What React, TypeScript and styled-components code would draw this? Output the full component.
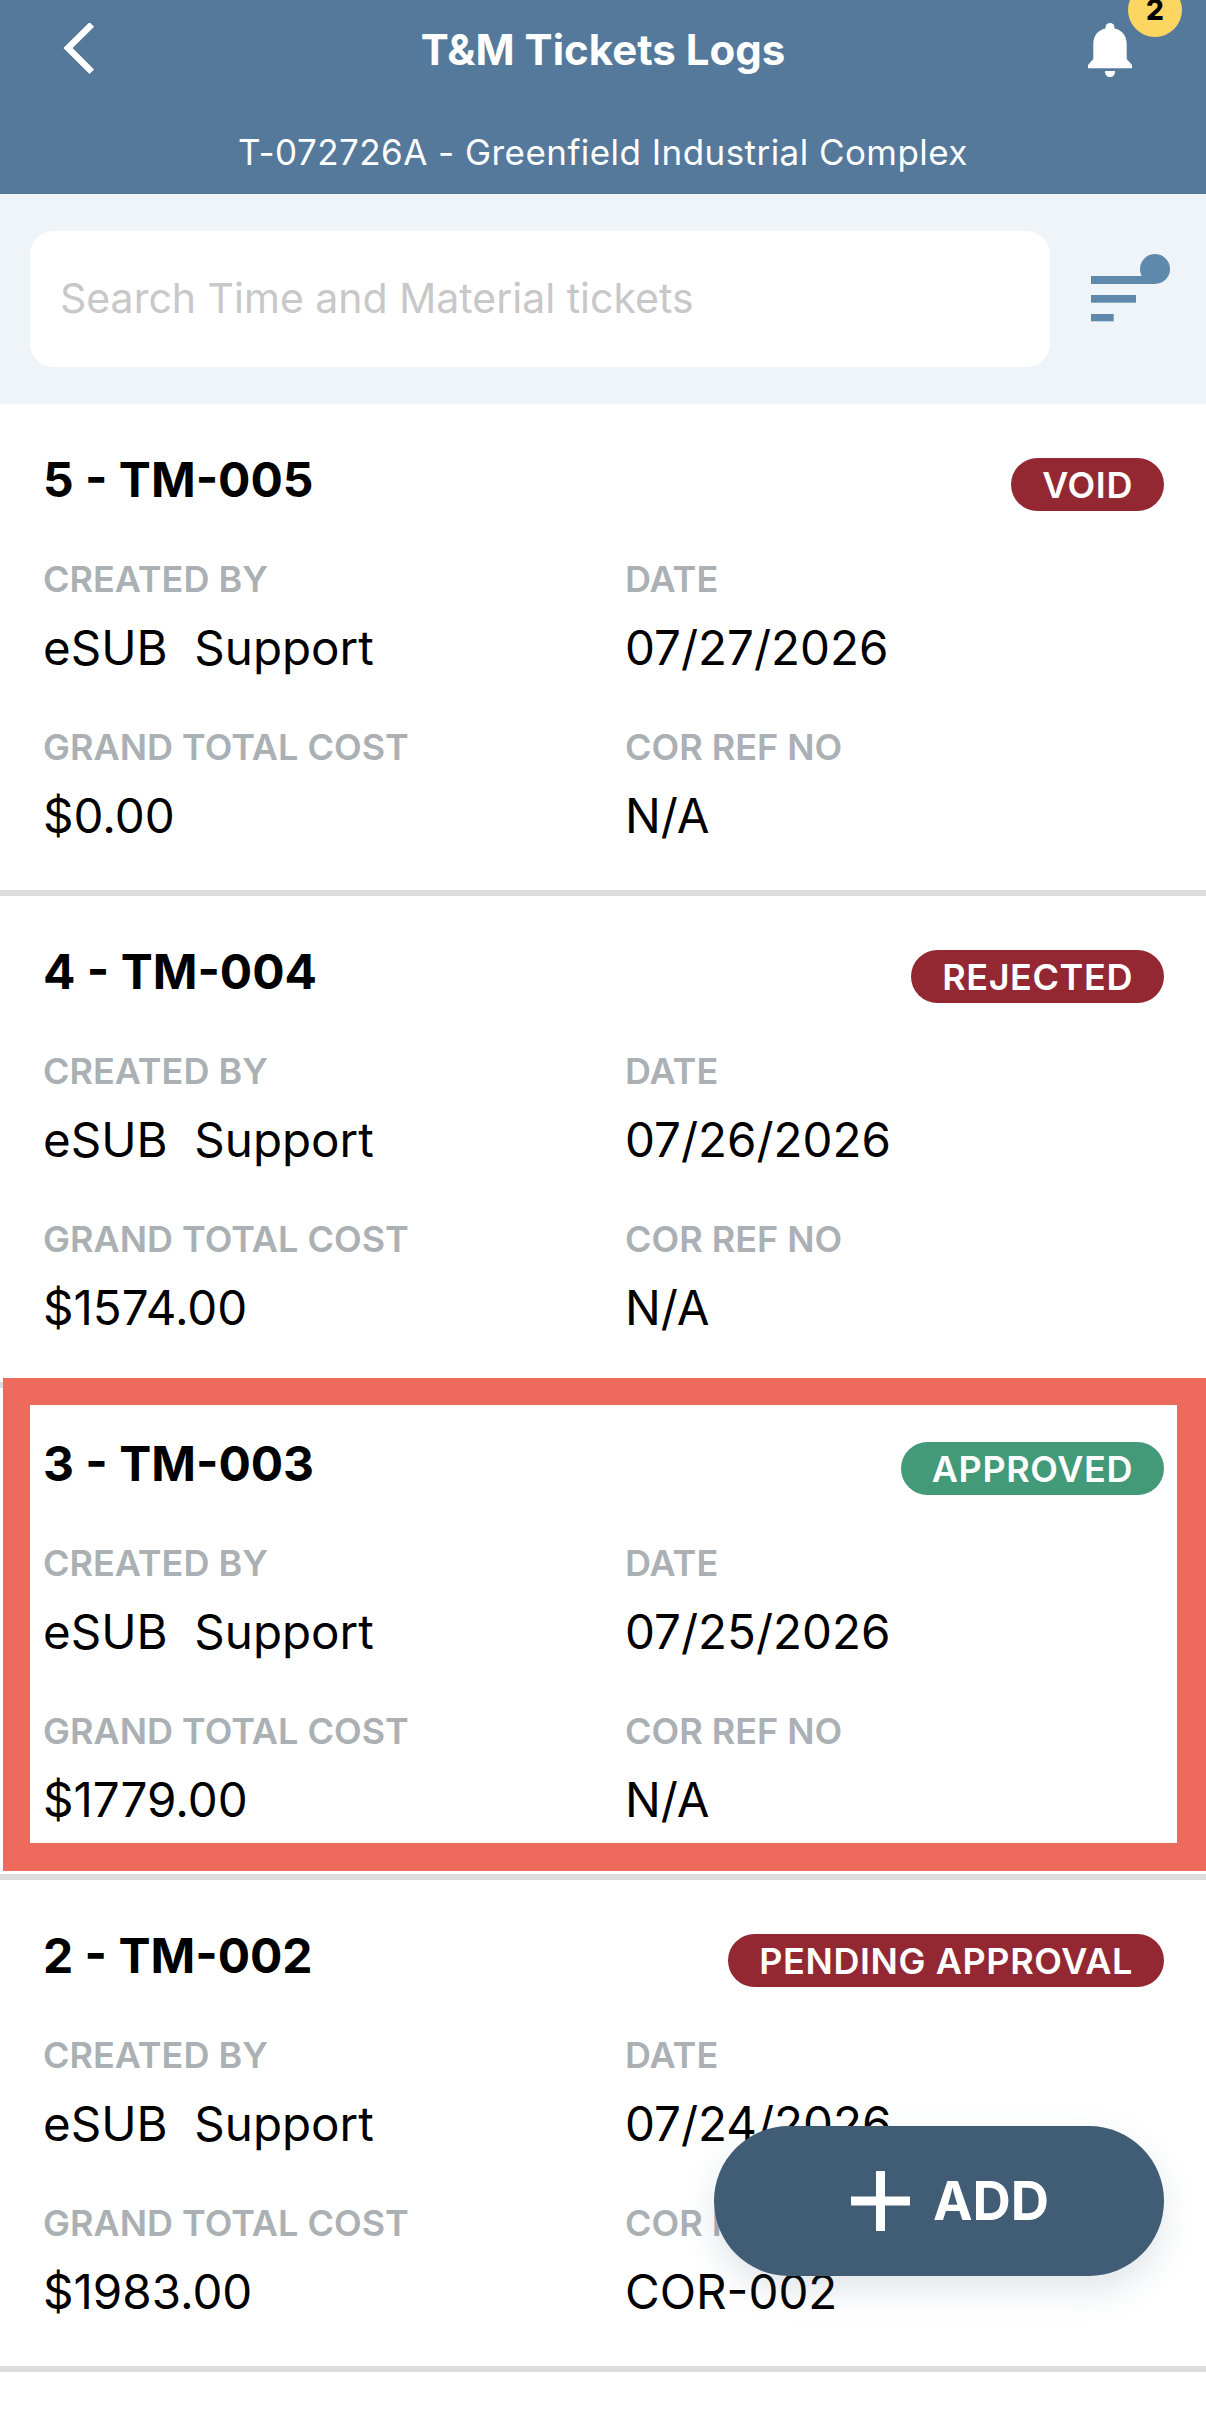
import styled, { createGlobalStyle } from 'styled-components';

type Ticket = {
  id: string;
  status: string;
  tone: 'red' | 'green';
  date: string;
  total: string;
  corRef: string;
  highlighted?: boolean;
};

const tickets: Ticket[] = [
  { id: '5 - TM-005', status: 'VOID', tone: 'red', date: '07/27/2026', total: '$0.00', corRef: 'N/A' },
  { id: '4 - TM-004', status: 'REJECTED', tone: 'red', date: '07/26/2026', total: '$1574.00', corRef: 'N/A' },
  { id: '3 - TM-003', status: 'APPROVED', tone: 'green', date: '07/25/2026', total: '$1779.00', corRef: 'N/A', highlighted: true },
  { id: '2 - TM-002', status: 'PENDING APPROVAL', tone: 'red', date: '07/24/2026', total: '$1983.00', corRef: 'COR-002' },
];

const GlobalStyle = createGlobalStyle`
  html, body {
    margin: 0;
    padding: 0;
    background: #fff;
  }
  * {
    box-sizing: border-box;
  }
`;

const Screen = styled.div`
  position: relative;
  width: 1206px;
  height: 2436px;
  overflow: hidden;
  background: #fff;
  font-family: Inter, "Liberation Sans", sans-serif;
`;

const Header = styled.header`
  height: 194px;
  background: #54799b;
  color: #fff;
  display: flex;
  flex-direction: column;
  align-items: center;
`;

const TopBar = styled.div`
  width: 100%;
  height: 100px;
  display: grid;
  grid-template-columns: 1fr auto 1fr;
  align-items: center;
  padding: 0 24px 0 63px;
`;

const Title = styled.h1`
  margin: 0 0 0 -39px;
  font-size: 42px;
  font-weight: 700;
  line-height: 100px;
`;

const Subtitle = styled.div`
  margin-top: 29px;
  font-size: 35px;
  line-height: 46px;
  letter-spacing: 0.45px;
`;

const BellWrap = styled.div`
  position: relative;
  justify-self: end;
  width: 94px;
  height: 54px;
`;

const BellBadge = styled.span`
  position: absolute;
  right: 0;
  top: -40px;
  width: 54px;
  height: 54px;
  border-radius: 50%;
  background: #fdd662;
  color: #000;
  font-size: 28px;
  font-weight: 800;
  line-height: 54px;
  text-align: center;
`;

const SearchBand = styled.div`
  height: 210px;
  background: #eff4f8;
  display: flex;
  align-items: flex-start;
  padding: 37px 0 0 30px;
  gap: 41px;
`;

const SearchBox = styled.div`
  flex: none;
  width: 1020px;
  height: 136px;
  border-radius: 24px;
  background: #fff;
  display: flex;
  align-items: center;
  padding: 0 0 2px 30px;
  font-size: 41px;
  color: #c8c8c8;
`;

const FilterIcon = styled.svg`
  margin-top: 21px;
  flex: none;
`;

const Card = styled.section`
  position: relative;
  height: 492px;
  padding: 0 42px 0 43px;
  border-bottom: 6px solid #dcdcdc;
  background: #fff;
`;

const CardHead = styled.div`
  height: 153px;
  display: flex;
  justify-content: space-between;
  align-items: flex-start;
`;

const CardTitle = styled.h2`
  margin: 42px 0 0;
  font-size: 48px;
  line-height: 68px;
  font-weight: 700;
  color: #000;
`;

const Badge = styled.span<{ $tone: 'red' | 'green' }>`
  margin-top: 54px;
  height: 53px;
  padding: 0 31px;
  border-radius: 27px;
  background: ${(p) => (p.$tone === 'green' ? '#429a78' : '#942832')};
  color: #fff;
  font-size: 36px;
  font-weight: 600;
  line-height: 55px;
  letter-spacing: 0.6px;
`;

const Fields = styled.div`
  display: grid;
  grid-template-columns: 582px 1fr;
  row-gap: 43px;
`;

const Field = styled.div`
  display: flex;
  flex-direction: column;
  gap: 13px;
`;

const Label = styled.div`
  font-size: 36px;
  line-height: 44px;
  font-weight: 600;
  color: #aab0b3;
`;

const Value = styled.div`
  font-size: 47.5px;
  line-height: 68px;
  color: #000;
  white-space: pre;
`;

const Highlight = styled.div`
  position: absolute;
  left: 3px;
  right: 0;
  top: -10px;
  height: 493px;
  border: solid #ee6a5c;
  border-width: 27px 29px 28px 27px;
  pointer-events: none;
`;

const AddButton = styled.button`
  position: absolute;
  left: 714px;
  top: 2126px;
  width: 450px;
  height: 150px;
  border: none;
  border-radius: 75px;
  background: #415c75;
  color: #fff;
  display: flex;
  align-items: center;
  justify-content: center;
  gap: 23px;
  padding: 0 0 0 22px;
  font-family: inherit;
  font-size: 53px;
  font-weight: 700;
  box-shadow: 0 14px 34px rgba(65, 92, 117, 0.16);
`;

function BackIcon() {
  return (
    <svg width="33" height="54" viewBox="0 0 33 54" fill="none">
      <path d="M28.800 1.500 L5 25 L28.800 48.700" stroke="#fff" strokeWidth="6.500" />
    </svg>
  );
}

function BellIcon() {
  return (
    <svg width="44" height="54" viewBox="0 0 44 54" fill="#fff">
      <circle cx="22" cy="4.500" r="4.500" />
      <path d="M22 5C12 5 5.300 11 5.300 21V36L0 42V45.300H44V42L38.700 36V21C38.700 11 32 5 22 5Z" />
      <path d="M17 48H27C27 52 25 54 22 54C19 54 17 52 17 48Z" />
    </svg>
  );
}

function TicketCard({ ticket }: { ticket: Ticket }) {
  return (
    <Card>
      <CardHead>
        <CardTitle>{ticket.id}</CardTitle>
        <Badge $tone={ticket.tone}>{ticket.status}</Badge>
      </CardHead>
      <Fields>
        <Field>
          <Label>CREATED BY</Label>
          <Value>eSUB  Support</Value>
        </Field>
        <Field>
          <Label>DATE</Label>
          <Value>{ticket.date}</Value>
        </Field>
        <Field>
          <Label>GRAND TOTAL COST</Label>
          <Value>{ticket.total}</Value>
        </Field>
        <Field>
          <Label>COR REF NO</Label>
          <Value>{ticket.corRef}</Value>
        </Field>
      </Fields>
      {ticket.highlighted && <Highlight />}
    </Card>
  );
}

export default function App() {
  return (
    <Screen>
      <GlobalStyle />
      <Header>
        <TopBar>
          <BackIcon />
          <Title>T&amp;M Tickets Logs</Title>
          <BellWrap>
            <BellIcon />
            <BellBadge>2</BellBadge>
          </BellWrap>
        </TopBar>
        <Subtitle>T-072726A - Greenfield Industrial Complex</Subtitle>
      </Header>
      <SearchBand>
        <SearchBox>Search Time and Material tickets</SearchBox>
        <FilterIcon width="80" height="70" viewBox="0 0 80 70" fill="#5e89ad">
          <circle cx="64" cy="17" r="15" />
          <rect x="0" y="24" width="64" height="8" />
          <rect x="0" y="43" width="45" height="7.700" />
          <rect x="0" y="62" width="22.700" height="7.300" />
        </FilterIcon>
      </SearchBand>
      {tickets.map((ticket) => (
        <TicketCard key={ticket.id} ticket={ticket} />
      ))}
      <AddButton>
        <svg width="59" height="60" viewBox="0 0 59 60" fill="none">
          <path d="M29.500 0V60M0 30H59" stroke="#fff" strokeWidth="9" />
        </svg>
        ADD
      </AddButton>
    </Screen>
  );
}
